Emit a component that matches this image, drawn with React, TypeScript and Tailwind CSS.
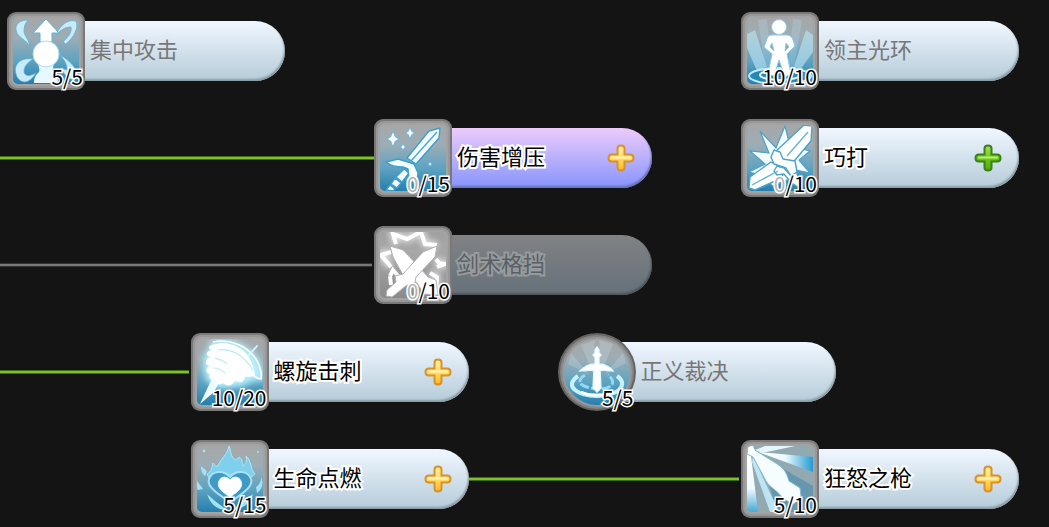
import { useId, type ReactNode } from "react";
import clsx from "clsx";

type Tone = "normal" | "selected" | "locked" | "maxed";
type Plus = "gold" | "green";

interface SkillProps {
  name: string;
  points: number;
  max: number;
  art: ReactNode;
  tone?: Tone;
  plus?: Plus;
  round?: boolean;
}

function FocusArt() {
  return (
    <g>
      <g fill="#c9ebf7" stroke="#5cb2d8" strokeWidth=".8">
        <path d="M21 8C13 8 8 12 9 18c1 7 9 9 14 16-2-8-6-11-6-15 0-5 1-7 4-11Z" />
        <path d="M49 23C53 13 61 7 69 9c3 7-2 16-10 23l-3-2c6-6 9-10 8-15-6 0-10 3-15 8Z" />
        <path d="M26 47C13 45 6 53 9 62c1 4 4 8 9 8 5-1 8-4 11-9-7 4-12 3-12-2 0-4 3-8 9-12Z" />
        <path d="M53 43c9 5 15 11 19 21l-7-4 3 9c-8-3-12-8-14-13l6 2c0-6-2-9-7-15Z" />
      </g>
      <path d="M39 7 52 21h-7v9H33v-9h-7Z" fill="#fff" stroke="#5fb4da" strokeWidth="1" />
      <path d="M27 71c0-6 2-8 5-11 1-2 0-5-1-8h16c-1 3-2 6-1 8 3 3 5 5 5 11Z" fill="#e8f8ff" />
      <circle cx="39" cy="42" r="13" fill="#fff" stroke="#a9dcf1" strokeWidth="1" />
    </g>
  );
}

function AuraArt() {
  return (
    <g>
      <g fill="#b9e2f2" opacity=".65">
        <path d="m6 22 8-4 12 37-10 4L6 36Z" />
        <path d="m17 8 9-1 5 50h-7Z" opacity=".4" />
        <path d="m52 7 9 1-8 48h-6Z" opacity=".4" />
        <path d="m65 18 7 5v17L59 58l-6-4Z" />
      </g>
      <ellipse cx="39" cy="64" rx="31" ry="8" fill="#2788b7" stroke="#bdeaff" strokeWidth="2" />
      <ellipse cx="39" cy="63" rx="20" ry="5" fill="none" stroke="#e4f8ff" strokeWidth="2" />
      <g fill="#fff" stroke="#8fcbe4" strokeWidth="1">
        <path d="M31 23h15c3 0 5 2 6 5l2 6-8 8 4 20-6 3-6-17-5 16-6-2 4-20-8-7 3-8c1-3 2-4 5-4Zm0 8-2 4 4 4Zm14 0-1 8 4-4Z" />
        <circle cx="38" cy="15" r="7.5" />
      </g>
    </g>
  );
}

function Sparkle({ x, y, r }: { x: number; y: number; r: number }) {
  const k = r / 5;
  return (
    <path
      d={`M${x} ${y - r}L${x + k * 1.4} ${y - k * 1.4}L${x + r * 0.75} ${y}L${x + k * 1.4} ${y + k * 1.4}L${x} ${y + r}L${x - k * 1.4} ${y + k * 1.4}L${x - r * 0.75} ${y}L${x - k * 1.4} ${y - k * 1.4}Z`}
      fill="#f4fcff"
      stroke="#59b3dc"
      strokeWidth=".8"
    />
  );
}

function SwordArt() {
  return (
    <g>
      <Sparkle x={19} y={20} r={8} />
      <Sparkle x={36} y={14} r={6} />
      <Sparkle x={29} y={28} r={4} />
      <circle cx="56" cy="45" r="1.5" fill="#a8e6ff" />
      <g fill="#f4fcff" stroke="#3b9fcf" strokeWidth="1.4" strokeLinejoin="round">
        <path d="m55 12 11-3-1 10-23 26-9-6Z" />
        <path d="m30 50 5 4-7 9-6-5Z" />
        <path d="m21 59 6 5-4 5-6-4Z" />
        <path d="m16 66 5 4-2 2-7-1Z" />
        <path d="m12 43 12-3 10 3 6 2 4 9-2 13-7-8-1-9-5-2c-7 0-12-1-17-5Z" />
      </g>
      <path d="M63 13 37 42" stroke="#4aa7d2" strokeWidth="1.4" />
    </g>
  );
}

function SmashArt() {
  return (
    <g>
      <path
        d="m19 12 16 17 9-22 5 20 20 5-11 9 11 13-14-3 5 19-14-9-15 6-5-9-18-5 16-8-15-13 19 2Z"
        fill="#f3fbff"
        stroke="#4ba3c9"
        strokeWidth="1.2"
      />
      <g fill="#fff" stroke="#4ba3c9" strokeWidth="1.4" strokeLinejoin="round">
        <path d="m63 6 8 1-1 15-21 25-12-4-4-9Z" />
        <path d="m30 43 13 7-2 9-27 12-6-2 1-11Z" />
        <path d="m33 31 6 2 3 7 12 2 2 11-6 4-5-8-12-4-3-7Z" />
        <path d="m36 47 7 2 8 9-3 3-5-6-7 1-3-4Z" />
      </g>
      <path d="M67 13 46 37M37 52 11 66" stroke="#66b4d6" strokeWidth="1.4" fill="none" />
    </g>
  );
}

function BlockArt() {
  const id = useId();
  const spikes = "M22 18 19 8l14 5 14-7 4 12 12 1M17 26 7 29l10 12M62 33l3 4 6 1-8 3M56 47l7 4-1 16";
  return (
    <g>
      <defs>
        <filter id={id} x="-20%" y="-20%" width="140%" height="140%">
          <feGaussianBlur stdDeviation="3" />
        </filter>
      </defs>
      <path d={spikes} fill="none" stroke="#fff" strokeWidth="7" filter={`url(#${id})`} opacity=".7" />
      <path d={spikes} fill="none" stroke="#fff" strokeWidth="4" />
      <path d="m16 50 3-6 6 7M16 50l1 9" fill="none" stroke="#fff" strokeWidth="4" />
      <g fill="#fff" stroke="#b0b0b0" strokeWidth="1" strokeLinejoin="round">
        <path d="m16 20 13 4 17 18 8 9 8 3 2 15-14-1-7-11-14-8L19 31Z" />
        <path d="m63 20-2 11-19 20-2 10-7-2-15 12-6-1 1-6 9-8-1-6 8-2 20-22Z" />
      </g>
    </g>
  );
}

function SpiralArt() {
  const id = useId();
  const cloud =
    "M22 9c18-4 35 5 43 17 4 7 6 14 5 20-4 1-6-2-9-1-1 4-4 4-7 4-3 5-8 3-11 1-2 5-7 4-10 2-4 3-8 2-7-2-6 1-9-2-7-5-5-1-5-6-1-7-6-2-5-6-1-8-5-3-3-8 2-8-4-4 0-7 6-7-5-2-6-5-3-6Z";
  return (
    <g>
      <defs>
        <filter id={id} x="-20%" y="-20%" width="140%" height="140%">
          <feGaussianBlur stdDeviation="3" />
        </filter>
      </defs>
      <path d={cloud} fill="#b5f0ff" stroke="#b5f0ff" strokeWidth="4" filter={`url(#${id})`} />
      <path d="m29 48-6 11-14 12 8-17 4-8Z" fill="#effcff" />
      <path
        d="M21 12c15-5 29 1 36 11 4 6 6 12 7 19-4 3-7 1-10 2-1 6-6 6-10 4-4 6-9 5-12 2-4 3-7 1-7-3-6 1-8-3-6-6-5-1-5-6 0-8-6-1-5-7 0-9-5-2-4-6 2-7-4-1-4-4 0-5Z"
        fill="#fff"
      />
      <path d="M22 9c18-4 35 5 43 17 4 7 6 14 5 20-3 0-6-2-8-4" fill="none" stroke="#fff" strokeWidth="1.6" />
      <path d="M27 17c12-2 25 4 35 20M24 25c5 2 9 2 12 6M22 35c6 0 9 2 12 5" fill="none" stroke="#bfe9f7" strokeWidth="1.2" />
      <path d="m66 13-8 9" stroke="#d9f7ff" strokeWidth="1.8" strokeLinecap="round" />
    </g>
  );
}

function JudgementArt() {
  return (
    <g>
      <path
        d="m37 7-2 34-12-29ZM41 7l14 4-12 30ZM13 20l19 22-22-11ZM65 20 46 42l22-12Z"
        fill="#dcecf2"
        opacity=".22"
      />
      <path
        d="M20 43c-7 5-8 10-3 14 10 8 34 8 44 0 5-5 4-10-2-14"
        fill="none"
        stroke="#c6f2ff"
        strokeWidth="4"
      />
      <path
        d="M27 42c-8 5-6 10 2 12 8 3 18 2 22 0 6-3 4-8-1-12"
        fill="none"
        stroke="#8edaf5"
        strokeWidth="3"
        strokeDasharray="9 2"
      />
      <path
        d="M37 20v-3l2-3 2 3v3l2 2-2 2v7c5 0 11 3 14 7l-13-1 1 18-4 4-4-4 1-18-14 1c4-4 10-7 15-7v-7l-2-2Z"
        fill="#fff"
        stroke="#e5f8ff"
        strokeWidth="1.4"
      />
      <path d="M23 59c8 4 23 4 32 0" fill="none" stroke="#fff" strokeWidth="3" />
    </g>
  );
}

function HeartArt() {
  return (
    <g>
      <path
        d="M38 6c2 4 1 8 4 12 2 2 5 2 6-1 4 2 3 6 4 9 3-1 4-5 3-10 6 5 4 13 9 18l-6 5-19-5-20 6-3-6c5-3 5-7 6-11 2 2 3 4 5 3 2-7 9-10 11-20Z"
        fill="#7fd0ed"
        stroke="#a9e7f8"
        strokeWidth="1"
      />
      <g fill="#a1e2f6">
        <path d="m10 26 6 5-2 5c-3-3-4-5-4-10ZM5 38c2 6 5 7 7 11l-5 1c-3-4-3-7-2-12ZM70 37c3 7 1 12-4 16l-1-6c4-3 5-5 5-10ZM16 54l8 7 12 9C25 70 19 63 16 54ZM62 54c-2 8-8 14-20 16l8-8Z" />
        <circle cx="13" cy="11" r="1.4" />
        <circle cx="67" cy="12" r="1" />
      </g>
      <path
        d="M39 62C20 50 16 44 18 39c3-9 15-9 21-2 6-7 18-7 21 2 2 5-2 11-21 23Z"
        fill="#3f9bc5"
        stroke="#a5e2f5"
        strokeWidth="2"
      />
      <path d="M39 57C28 50 26 46 28 41c2-5 8-5 11-1 3-4 9-4 11 1s0 9-11 16Z" fill="#fff" stroke="#d7f6ff" strokeWidth="1" />
    </g>
  );
}

function SpearArt() {
  const id = useId();
  return (
    <g>
      <defs>
        <linearGradient id={id} x1="0" x2="1">
          <stop offset="0" stopColor="#fff" />
          <stop offset=".5" stopColor="#eafaff" />
          <stop offset="1" stopColor="#239bd3" />
        </linearGradient>
        <linearGradient id={`${id}v`} x1="0" x2="0" y1="0" y2="1">
          <stop offset="0" stopColor="#fff" />
          <stop offset=".6" stopColor="#f0fbff" />
          <stop offset="1" stopColor="#45a9d5" />
        </linearGradient>
      </defs>
      <path d="M6 6h66v66H6Z" fill="#92a9b2" />
      <path d="m20 16 52 30v26H36Z" fill="#4a8cab" opacity=".6" />
      <path d="m17 12 55 5v15Z" fill={`url(#${id})`} />
      <path d="m14 10 10-4h30L21 13Z" fill="#e5f7fd" />
      <path d="M6 13 10 16 17 72H6Z" fill={`url(#${id}v)`} />
      <path d="m12 16 26 56h-9L11 22Z" fill="#bde4f2" />
      <path
        d="m7 6 10 6 16 10c10 6 12 9 15 19l11 7 1 8-7 8-11-5c-5-9-12-10-17-18L12 17l-6-3Z"
        fill="#f5fdff"
        stroke="#7dbbd1"
        strokeWidth="1"
      />
      <path d="M7 14 15 13 12 6H7Z" fill="#fff" />
    </g>
  );
}

function PlusIcon({ color }: { color: Plus }) {
  const id = useId();
  const gold = color === "gold";
  return (
    <svg viewBox="0 0 28 28" className="size-7">
      <defs>
        <linearGradient id={id} x1="0" x2="0" y1="0" y2="1">
          <stop offset="0" stopColor={gold ? "#fff0a0" : "#a7e05b"} />
          <stop offset=".5" stopColor={gold ? "#ffdc69" : "#6cc61d"} />
          <stop offset="1" stopColor={gold ? "#ffb71c" : "#4cad0b"} />
        </linearGradient>
      </defs>
      <path
        d="M14 1.5c-2.5 0-3.5 1-3.5 3v6H5c-2.5 0-3.5 1.2-3.5 3.500S2.500 17.500 5 17.500h5.500v6c0 2 1 3 3.500 3s3.500-1 3.500-3v-6H23c2.500 0 3.500-1.200 3.500-3.500s-1-3.500-3.500-3.500h-5.500v-6c0-2-1-3-3.500-3Z"
        fill={`url(#${id})`}
        stroke={gold ? "#d9912b" : "#398016"}
        strokeWidth="2"
      />
      <path d="M5 13.500h18" stroke={gold ? "#fff4b8" : "#b9ec75"} strokeWidth="2" strokeLinecap="round" />
    </svg>
  );
}

function IconFrame({ art, round, gray }: { art: ReactNode; round?: boolean; gray?: boolean }) {
  const id = useId();
  return (
    <svg viewBox="0 0 78 78" className="size-full" aria-hidden="true">
      <defs>
        <linearGradient id={`${id}bg`} x1="0" x2="0" y1="0" y2="1">
          <stop offset="0" stopColor={gray ? "#a0a0a0" : "#a6a7a8"} />
          <stop offset=".3" stopColor={gray ? "#a8a8a8" : "#9cadb5"} />
          <stop offset=".65" stopColor={gray ? "#9a9a9a" : "#5fa3c1"} />
          <stop offset="1" stopColor={gray ? "#8a8a8a" : "#257fae"} />
        </linearGradient>
        <clipPath id={`${id}clip`}>
          <rect x="6" y="6" width="66" height="66" rx={round ? 33 : 5} />
        </clipPath>
      </defs>
      <rect width="78" height="78" rx={round ? 39 : 9} fill={round ? "#646464" : "#787878"} />
      <rect x="2" y="2" width="74" height="74" rx={round ? 37 : 8} fill={round ? "#858585" : "#989898"} />
      <rect x="4" y="4" width="70" height="70" rx={round ? 35 : 7} fill={round ? "#999" : "#a3a3a3"} />
      <rect x="6" y="6" width="66" height="66" rx={round ? 33 : 5} fill={`url(#${id}bg)`} />
      <g clipPath={`url(#${id}clip)`}>{art}</g>
    </svg>
  );
}

function Skill({ name, points, max, art, tone = "normal", plus, round }: SkillProps) {
  return (
    <div className="flex w-[278px] shrink-0 items-center">
      <div className="relative z-10 size-[78px] shrink-0">
        <IconFrame art={art} round={round} gray={tone === "locked"} />
        <span className="absolute right-0.5 bottom-0.5 text-[21px] leading-6 text-black [paint-order:stroke] [-webkit-text-stroke:3px_white]">
          <span className={clsx(points === 0 && "text-[#b5b5b5]")}>{points}</span>/{max}
        </span>
      </div>
      <div
        className={clsx(
          "-ml-10 flex h-[60px] flex-1 items-center justify-between rounded-r-full pr-[17px] pl-[45px]",
          tone === "selected" &&
            "bg-linear-to-b from-[#edcbfb] to-[#8793fb] shadow-[inset_-1px_-2px_2px_#6973b8]",
          tone === "locked" &&
            "bg-linear-to-b from-[#818284] to-[#66717a] shadow-[inset_-1px_-2px_2px_#50575c]",
          (tone === "normal" || tone === "maxed") &&
            "bg-linear-to-b from-[#f1f7ff] to-[#b5ccd9] shadow-[inset_-1px_-2px_2px_#8b9ba4]",
        )}
      >
        <span
          className={clsx(
            "pb-1.5 text-[22px] leading-8 whitespace-nowrap [paint-order:stroke]",
            tone === "maxed" && "text-[#777]",
            tone === "locked" && "text-[#5a6064] [-webkit-text-stroke:4px_#979b9e]",
            (tone === "normal" || tone === "selected") && "text-black [-webkit-text-stroke:4px_white]",
          )}
        >
          {name}
        </span>
        {plus && (
          <button type="button" aria-label={name} className="cursor-pointer">
            <PlusIcon color={plus} />
          </button>
        )}
      </div>
    </div>
  );
}

function Connector({ active = true }: { active?: boolean }) {
  return (
    <div
      className={clsx(
        "h-1 flex-1 border-y",
        active ? "border-[#3f6a16] bg-[#7fc02a]" : "border-[#333] bg-[#777]",
      )}
    />
  );
}

export default function App() {
  return (
    <main className="min-h-screen overflow-x-auto bg-[#141414] pt-3 pr-[30px] pb-2 pl-[7px] font-['Noto_Sans_CJK_SC',sans-serif]">
      <div className="grid grid-cols-[1fr_1fr_1fr_1fr_278px] gap-y-[29px]">
        <div className="col-span-4 flex">
          <Skill name="集中攻击" points={5} max={5} art={<FocusArt />} tone="maxed" />
        </div>
        <Skill name="领主光环" points={10} max={10} art={<AuraArt />} tone="maxed" />

        <div className="col-span-2 -ml-[7px] flex items-center">
          <Connector />
        </div>
        <div className="col-span-2 flex">
          <Skill name="伤害增压" points={0} max={15} art={<SwordArt />} tone="selected" plus="gold" />
        </div>
        <Skill name="巧打" points={0} max={10} art={<SmashArt />} plus="green" />

        <div className="col-span-2 -ml-[7px] flex items-center pr-0.5">
          <Connector active={false} />
        </div>
        <div className="col-span-3 flex">
          <Skill name="剑术格挡" points={0} max={10} art={<BlockArt />} tone="locked" />
        </div>

        <div className="-ml-[7px] flex items-center pr-0.5">
          <Connector />
        </div>
        <div className="col-span-2 flex">
          <Skill name="螺旋击刺" points={10} max={20} art={<SpiralArt />} plus="gold" />
        </div>
        <div className="col-span-2 flex">
          <Skill name="正义裁决" points={5} max={5} art={<JudgementArt />} tone="maxed" round />
        </div>

        <div className="col-span-3 col-start-2 flex items-center pr-0.5">
          <Skill name="生命点燃" points={5} max={15} art={<HeartArt />} plus="gold" />
          <Connector />
        </div>
        <Skill name="狂怒之枪" points={5} max={10} art={<SpearArt />} plus="gold" />
      </div>
    </main>
  );
}
